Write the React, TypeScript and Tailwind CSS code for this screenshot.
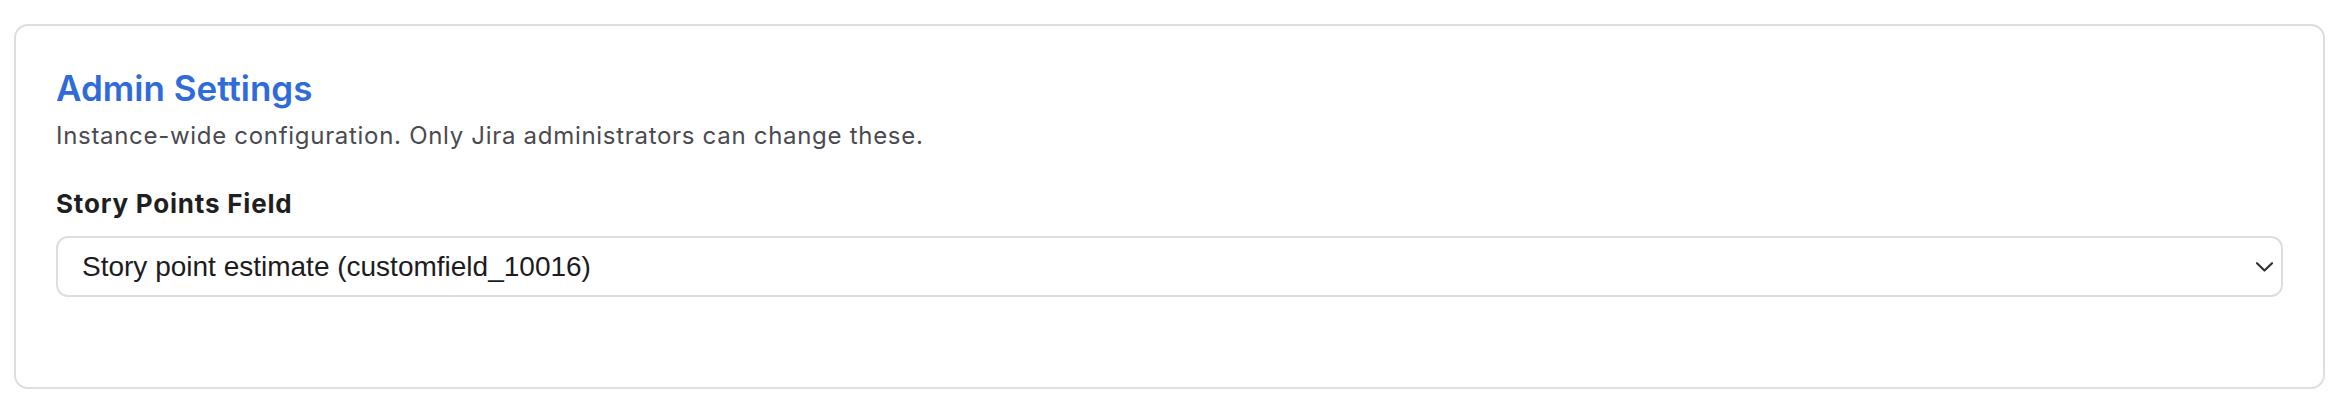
import React from 'react';

const AdminSettings: React.FC = () => {
  return (
    <div className="min-h-screen bg-white pt-[24px] pl-[14px] font-['Inter','Liberation_Sans',Arial,sans-serif]">
      <section className="w-[2311px] h-[365px] border-2 border-[#dedede] rounded-[14px] px-[40px] pt-[40px]">
        <h2 className="text-[35px] leading-[44px] font-semibold text-[#2f6bd9]">Admin Settings</h2>
        <p className="mt-[10px] text-[24px] leading-[32px] tracking-[0.7px] text-[#4a4a50]">
          Instance-wide configuration. Only Jira administrators can change these.
        </p>

        <label className="block mt-[36px] text-[26px] leading-[32px] font-bold tracking-[0.8px] text-[#1f1f22]">
          Story Points Field
        </label>
        <div className="mt-[16px] h-[61px] border-2 border-[#dedede] rounded-[12px] pl-[24px] pr-[8px] flex items-center justify-between">
          <span className="font-['Liberation_Sans',Arial,sans-serif] text-[28px] text-[#1c1c1e]">
            Story point estimate (customfield_10016)
          </span>
          <svg width="17" height="10" viewBox="0 0 17 10" fill="none">
            <path d="M1 1.2L8.5 8.5L16 1.2" stroke="#333336" strokeWidth="2.2" strokeLinecap="round" strokeLinejoin="round" />
          </svg>
        </div>
      </section>
    </div>
  );
};

export default function App() {
  return <AdminSettings />;
}
